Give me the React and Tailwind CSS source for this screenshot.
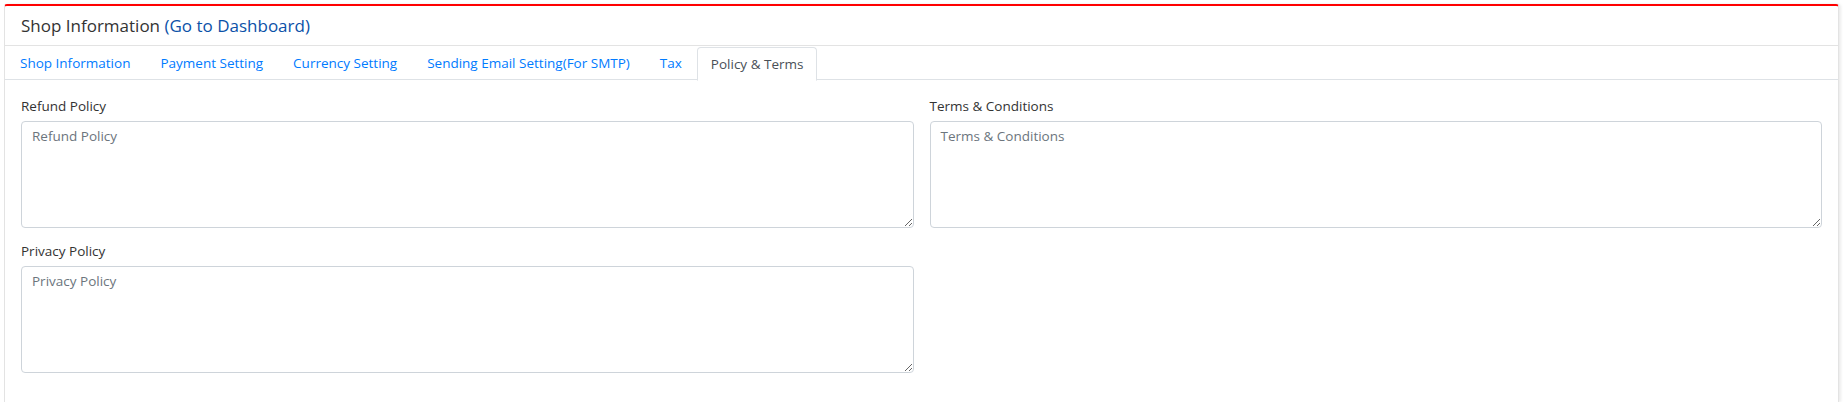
import { useState } from "react";

const tabs = [
    "Shop Information",
    "Payment Setting",
    "Currency Setting",
    "Sending Email Setting(For SMTP)",
    "Tax",
    "Policy & Terms",
];

function Field({ label }) {
    return (
        <div className="flex flex-col">
            <label className="text-[13.5px] leading-[20px] text-[#333] mb-[5px]">{label}</label>
            <textarea
                placeholder={label}
                className="h-[107px] w-full rounded-[4px] border border-[#ced4da] px-[10px] py-[4px] text-[13.5px] leading-[20px] text-[#495057] placeholder:text-[#6c757d] outline-none"
            />
        </div>
    );
}

export default function App() {
    const [active, setActive] = useState("Policy & Terms");

    return (
        <div className="pt-1 pl-1 pr-[6px] bg-white min-h-[402px]" style={{ fontFamily: '"Open Sans", "Liberation Sans", sans-serif' }}>
            <div className="bg-white border-t-2 border-t-[#ff0000] border-x border-x-[#e3e3e3] rounded-t-[3px] shadow-[2px_0_3px_rgba(0,0,0,0.08)] min-h-[398px]">
                {/* Header */}
                <div className="h-[40px] border-b border-[#e3e3e3] px-4 flex items-center text-[17px] text-[#333]">
                    Shop Information&nbsp;<a href="#" className="text-[#0b51a8]">(Go to Dashboard)</a>
                </div>

                {/* Tabs */}
                <div className="flex border-b border-[#dee2e6] h-[34px] pt-px">
                    {tabs.map((t) => (
                        <button
                            key={t}
                            onClick={() => setActive(t)}
                            className={
                                t === active
                                    ? "h-[34px] px-[13px] text-[13.5px] text-[#495057] bg-white border border-[#dee2e6] border-b-white rounded-t-[4px]"
                                    : "h-[33px] px-[14px] text-[13.5px] text-[#007bff] border border-transparent"
                            }
                        >
                            {t}
                        </button>
                    ))}
                </div>

                {/* Body */}
                <div className="px-4 pt-4 pb-4 grid grid-cols-2 gap-x-4 gap-y-[13px]">
                    <Field label="Refund Policy" />
                    <Field label="Terms & Conditions" />
                    <Field label="Privacy Policy" />
                </div>
            </div>
        </div>
    );
}
